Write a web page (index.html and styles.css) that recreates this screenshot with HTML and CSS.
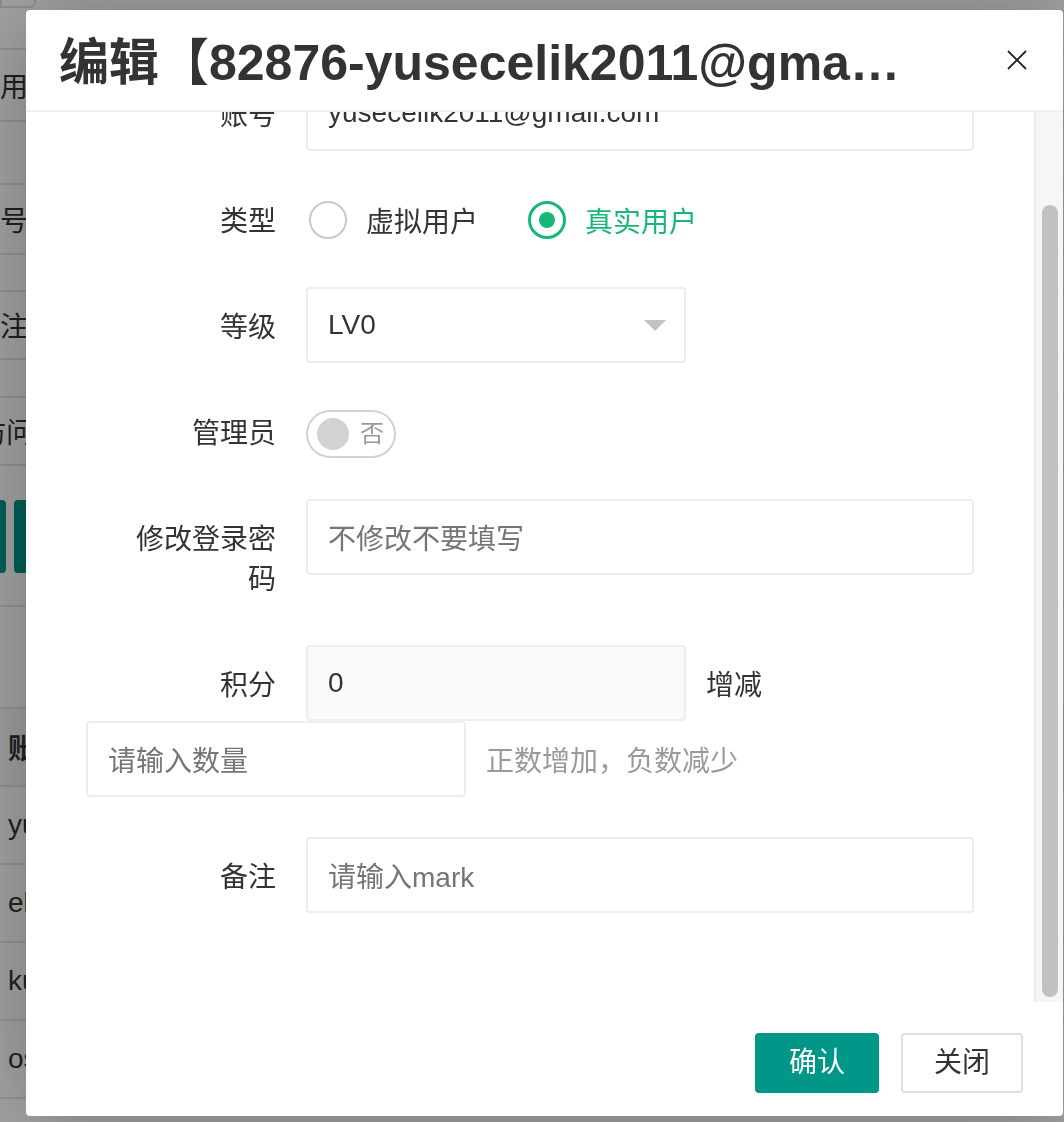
FILE: index.html
```html
<!DOCTYPE html>
<html lang="zh-CN">
<head>
<meta charset="utf-8">
<title>用户管理</title>
<link rel="stylesheet" href="styles.css">
</head>
<body>
<div class="page">
  <div class="page-top"></div>
  <div class="search-field f1"><span>用户名</span></div>
  <div class="search-field f2"><span>号码</span></div>
  <div class="search-field f3"><span>注册时间</span></div>
  <div class="search-field f4"><span class="shift">访问时间</span></div>
  <div class="toolbar"><span class="pbtn b1"></span><span class="pbtn b2"></span></div>
  <div class="page-rule"></div>
  <div class="ptable">
    <div class="prow phead"><span>账号</span></div>
    <div class="prow"><span>yusecelik2011@gmail.com</span></div>
    <div class="prow"><span>elif@gmail.com</span></div>
    <div class="prow"><span>kurt@gmail.com</span></div>
    <div class="prow"><span>osman@gmail.com</span></div>
  </div>
</div>

<div class="shade"></div>

<div class="dialog">
  <div class="dialog-title">
    <div class="title-text">编辑【82876-yusecelik2011@gmail.com】</div>
    <button class="dialog-close" type="button" aria-label="关闭">
      <svg width="20" height="20" viewBox="0 0 20 20"><path d="M1 1 L19 19 M19 1 L1 19" stroke="#222" stroke-width="1.8" fill="none"/></svg>
    </button>
  </div>

  <div class="dialog-body">
    <div class="scroll-area">
      <div class="form">
        <div class="item">
          <div class="label">账号</div>
          <div class="input-block"><div class="field">yusecelik2011@gmail.com</div></div>
        </div>

        <div class="item">
          <div class="label">类型</div>
          <div class="input-block radios">
            <div class="radio"><span class="radio-icon"></span><span>虚拟用户</span></div>
            <div class="radio checked"><span class="radio-icon"></span><span>真实用户</span></div>
          </div>
        </div>

        <div class="item">
          <div class="label">等级</div>
          <div class="input-block">
            <div class="field select"><span>LV0</span><span class="caret"></span></div>
          </div>
        </div>

        <div class="item">
          <div class="label">管理员</div>
          <div class="input-block switch-wrap">
            <div class="switch"><span class="knob"></span><span class="switch-text">否</span></div>
          </div>
        </div>

        <div class="item">
          <div class="label">修改登录密码</div>
          <div class="input-block"><div class="field placeholder">不修改不要填写</div></div>
        </div>

        <div class="item wrap">
          <div class="inline">
            <div class="label">积分</div>
            <div class="input-inline"><div class="field readonly">0</div></div>
            <div class="mid">增减</div>
          </div>
          <div class="inline second">
            <div class="input-inline"><div class="field placeholder">请输入数量</div></div>
            <div class="mid aux">正数增加，负数减少</div>
          </div>
        </div>

        <div class="item">
          <div class="label">备注</div>
          <div class="input-block"><div class="field placeholder">请输入mark</div></div>
        </div>
      </div>
    </div>
    <div class="scrollbar"><div class="thumb"></div></div>
  </div>

  <div class="dialog-footer">
    <button class="btn btn-primary" type="button">确认</button>
    <button class="btn btn-default" type="button">关闭</button>
  </div>
</div>
</body>
</html>
```

FILE: styles.css
```css
* { box-sizing: border-box; }

html, body {
  margin: 0;
  padding: 0;
}

body {
  width: 1064px;
  height: 1122px;
  overflow: hidden;
  background: #fff;
  color: #333;
  font-family: "Liberation Sans", "Noto Sans CJK SC", sans-serif;
  font-size: 28px;
}

/* ---------- page behind the dialog ---------- */
.page {
  width: 1064px;
}

.page-top {
  width: 36px;
  height: 8px;
  border: 2px solid #e0e0e0;
  border-top: none;
  border-radius: 0 0 6px 0;
}

.search-field {
  display: flex;
  align-items: center;
  white-space: nowrap;
  border-top: 2px solid #e6e6e6;
  border-bottom: 2px solid #e6e6e6;
  color: #333;
}

.f1 { margin-top: 40px; height: 74px; }
.f2 { margin-top: 61px; height: 72px; }
.f3 { margin-top: 35px; height: 70px; }
.f4 { margin-top: 36px; height: 70px; }

.shift { margin-left: -22px; }

.toolbar {
  display: flex;
  gap: 8px;
  margin-top: 34px;
  margin-left: -94px;
}

.pbtn {
  width: 100px;
  height: 73px;
  border-radius: 4px;
  background: #009688;
}

.page-rule {
  margin-top: 32px;
  height: 2px;
  background: #e6e6e6;
}

.ptable {
  margin-top: 100px;
  border-top: 2px solid #e6e6e6;
}

.prow {
  height: 78px;
  display: flex;
  align-items: center;
  padding-left: 8px;
  border-bottom: 2px solid #e6e6e6;
  white-space: nowrap;
}

.phead {
  font-weight: bold;
  background: #f8f8f8;
}

/* ---------- shade ---------- */
.shade {
  position: fixed;
  inset: 0;
  background: rgba(0, 0, 0, 0.36);
}

/* ---------- dialog ---------- */
.dialog {
  position: fixed;
  left: 26px;
  top: 10px;
  width: 1037px;
  height: 1106px;
  background: #fff;
  border-radius: 4px;
  box-shadow: 2px 2px 90px rgba(0, 0, 0, 0.3);
  display: flex;
  flex-direction: column;
  overflow: hidden;
}

.dialog-title {
  flex: none;
  height: 102px;
  border-bottom: 2px solid #f0f0f0;
  display: flex;
  align-items: center;
  padding: 0 36px 0 33px;
}

.title-text {
  flex: 1;
  min-width: 0;
  margin-right: 100px;
  padding-top: 5px;
  font-size: 50px;
  font-weight: bold;
  line-height: 64px;
  color: #333;
  white-space: nowrap;
  overflow: hidden;
  text-overflow: ellipsis;
}

.dialog-close {
  flex: none;
  width: 20px;
  height: 20px;
  padding: 0;
  margin: 0;
  border: none;
  background: none;
  display: flex;
}

.dialog-body {
  flex: none;
  height: 890px;
  display: flex;
  overflow: hidden;
}

.scroll-area {
  flex: 1;
  overflow: hidden;
}

.form {
  padding: 0 60px;
  margin-top: -37px;
}

.scrollbar {
  flex: none;
  width: 29px;
  background: #f6f6f6;
  border-left: 2px solid #ececec;
  padding: 93px 5px 5px 6px;
}

.thumb {
  height: 100%;
  border-radius: 8px;
  background: #c1c1c1;
}

/* ---------- form ---------- */
.item {
  display: flex;
  margin-bottom: 30px;
}

.label {
  flex: none;
  width: 220px;
  padding: 21px 30px 15px;
  line-height: 40px;
  text-align: right;
  color: #333;
}

.input-block {
  flex: 1;
  min-width: 0;
}

.field {
  display: flex;
  align-items: center;
  height: 76px;
  padding: 0 20px;
  border: 2px solid #eee;
  border-radius: 4px;
  background: #fff;
  color: #333;
  white-space: nowrap;
  overflow: hidden;
}

.placeholder { color: #757575; }
.readonly { background: #fafafa; }

.select {
  width: 380px;
  justify-content: space-between;
  padding-right: 18px;
}

.caret {
  width: 0;
  height: 0;
  border-left: 11px solid transparent;
  border-right: 11px solid transparent;
  border-top: 11px solid #c2c2c2;
}

.radios {
  display: flex;
  align-items: center;
  height: 76px;
  padding-left: 3px;
  padding-top: 2px;
}

.radio {
  display: flex;
  align-items: center;
  gap: 19px;
  color: #333;
}

.radio + .radio { margin-left: 50px; }

.radio-icon {
  width: 38px;
  height: 38px;
  border: 2px solid #c8c8c8;
  border-radius: 50%;
  display: flex;
  align-items: center;
  justify-content: center;
}

.radio.checked { color: #16b777; }

.radio.checked .radio-icon {
  border: 3px solid #16b777;
}

.radio.checked .radio-icon::after {
  content: "";
  width: 16px;
  height: 16px;
  border-radius: 50%;
  background: #16b777;
}

.switch-wrap {
  display: flex;
  align-items: center;
  height: 76px;
  padding-top: 5px;
}

.switch {
  width: 90px;
  height: 48px;
  border: 2px solid #d2d2d2;
  border-radius: 24px;
  display: flex;
  align-items: center;
  padding-left: 9px;
}

.knob {
  width: 32px;
  height: 32px;
  border-radius: 50%;
  background: #d2d2d2;
}

.switch-text {
  margin-left: 11px;
  margin-top: -4px;
  font-size: 24px;
  color: #999;
}

.wrap {
  flex-wrap: wrap;
}

.inline {
  display: flex;
}

.inline.second {
  margin-bottom: 10px;
}

.input-inline {
  width: 380px;
  margin-right: 20px;
}

.mid {
  padding: 21px 0 15px;
  line-height: 40px;
  white-space: nowrap;
  color: #333;
}

.mid.aux { color: #999; }

/* ---------- footer ---------- */
.dialog-footer {
  flex: none;
  height: 114px;
  display: flex;
  justify-content: flex-end;
  gap: 22px;
  padding: 31px 40px 0 0;
}

.btn {
  height: 60px;
  padding: 0;
  border-radius: 4px;
  font-family: inherit;
  font-size: 28px;
  line-height: 56px;
  cursor: pointer;
}

.btn-primary {
  width: 124px;
  background: #009688;
  border: 2px solid #009688;
  color: #fff;
}

.btn-default {
  width: 122px;
  background: #fff;
  border: 2px solid #dedede;
  color: #333;
}
```
